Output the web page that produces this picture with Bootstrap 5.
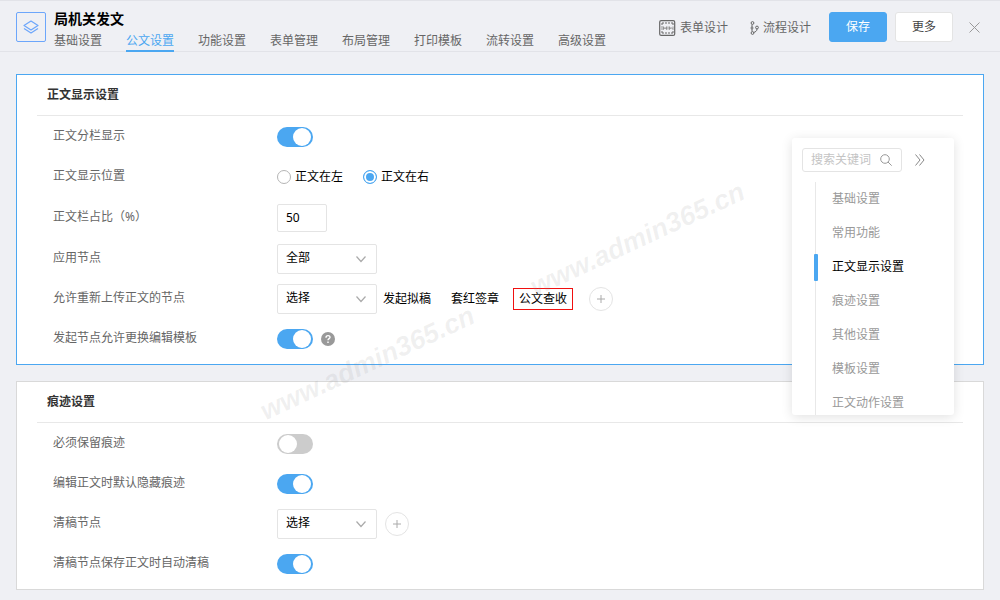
<!DOCTYPE html>
<html lang="zh-CN">
<head>
<meta charset="utf-8">
<meta name="viewport" content="width=device-width, initial-scale=1">
<title>局机关发文 - 公文设置</title>
<link href="https://cdn.jsdelivr.net/npm/bootstrap@5.3.0/dist/css/bootstrap.min.css" rel="stylesheet">
<style>
:root { --accent: #4ba7f1; --line: #e4e4e4; --ink: #666; }
body { font: 12px/18px "Noto Sans", "Noto Sans CJK SC", sans-serif; color: var(--ink); background: #eff0f4; }
button, input, select { font: inherit; }
.topbar { border-top: 1px solid #e2e3e8; border-bottom: 1px solid #e2e3e8; height: 52px; padding-top: 2px; }
.app-icon { width: 30px; height: 30px; border: 1px solid #6ca6fb; border-radius: 2px; }
.app-title { font-size: 14px; line-height: 18px; color: #000; }
.tabs { gap: 24px; margin-bottom: -1px; }
.tabs .nav-link { padding: 4px 0 0; height: 24px; color: var(--ink); border-bottom: 2px solid transparent; }
.tabs .nav-link.active { color: var(--accent); border-color: var(--accent); }
.tool { color: var(--ink); text-decoration: none; gap: 4px; padding-top: 2px; }
.tool-form { margin-right: 22px; }
.tool-flow { margin-right: 18px; }
.act { width: 58px; height: 30px; padding: 0; font-size: 12px; line-height: 18px; border-radius: 3px; }
.act-save { background: var(--accent); border-color: var(--accent); color: #fff; }
.act-more { background: #fff; border: 1px solid var(--line); color: #444; }
.bare { background: none; border: 0; padding: 0; display: flex; }
main { padding: 22px 16px 10px; }
.panel { border: 1px solid #d9d9d9; border-radius: 0; padding: 0 20px 5px; color: var(--ink); }
.panel.current { border-color: var(--accent); }
.panel-title { height: 41px; margin: 0 0 1px; padding: 0 10px; font-size: 12px; color: #333; border-bottom: 1px solid #e8e8e8; }
.setting { height: 40px; padding-left: 16px; }
.setting.tall { height: 42px; }
.setting-label { width: 224px; padding-bottom: 2px; flex: none; }
.toggle { appearance: none; width: 36px; height: 20px; margin: 0; padding: 1px 2px; border-radius: 10px; background: #ccc; display: flex; flex: none; }
.toggle::before { content: ""; width: 18px; height: 18px; border-radius: 50%; background: #fff; }
.toggle:checked { background: var(--accent); justify-content: end; }
.dot { appearance: none; width: 14px; height: 14px; margin: 0; border: 1px solid #b5b5b5; border-radius: 50%; background: #fff; }
.dot:checked { border-color: var(--accent); background: var(--accent); box-shadow: inset 0 0 0 2px #fff; }
.field, .picker { border: 1px solid var(--line); border-radius: 2px; font-size: 12px; line-height: 18px; padding: 0 8px 2px; color: #000; }
.field { width: 50px; height: 28px; }
.picker { width: 100px; height: 30px; background: #fff url("data:image/svg+xml,%3Csvg xmlns='http://www.w3.org/2000/svg' viewBox='0 0 10 10'%3E%3Cpath d='M.5 2.5 5 7.500 9.500 2.500' fill='none' stroke='%23aaa' stroke-width='1.200'/%3E%3C/svg%3E") no-repeat right 10px center / 10px 10px; }
.node-tag { padding: 1px 5px; border: 1px solid transparent; color: #000; }
.node-tag.picked { border-color: #f01010; }
.add { width: 24px; height: 24px; padding: 0; border: 1px solid var(--line); border-radius: 50%; background: #fff; display: flex; align-items: center; justify-content: center; }
.anchor-menu { top: 86px; right: 46px; width: 162px; height: 277px; padding: 10px 10px 0; background: #fff; border-radius: 3px; box-shadow: 0 2px 12px rgba(0,0,0,.12); overflow: hidden; z-index: 3; }
.search { width: 100px; height: 24px; border: 1px solid var(--line); border-radius: 3px; padding: 0 9px 0 8px; }
.search input { width: 64px; border: 0; padding: 0; outline: 0; background: none; }
.search input::placeholder { color: #c4c4c4; opacity: 1; }
.collapse-btn { margin-left: 13px; }
.anchor-list { margin: 10px 0 0 13px; border-left: 1px solid #e8e8e8; }
.anchor-list .nav-link { height: 34px; padding: 0 0 0 16px; color: #999; display: flex; align-items: center; }
.anchor-list .nav-link.active { color: #000; }
.anchor-list .nav-link.active::before { content: ""; width: 4px; height: 27px; margin: 0 14px 0 -18px; border-radius: 1px; background: var(--accent); }
.watermark { font: italic bold 27px/30px "Liberation Sans", sans-serif; color: rgba(140,140,140,.13); transform: rotate(-25deg); transform-origin: left bottom; pointer-events: none; z-index: 2; white-space: nowrap; }
.mark-a { left: 268px; top: 344px; }
.mark-b { left: 538px; top: 220px; }
</style>
</head>
<body>
<header class="topbar d-flex px-3">
  <div class="app-icon d-flex align-items-center justify-content-center flex-shrink-0 me-2 align-self-center">
    <svg width="16" height="14" viewBox="0 0 16 14" fill="none" stroke="#6ca6fb" stroke-width="1.200" stroke-linejoin="round"><path d="M8 1 15 5.500 8 10 1 5.500ZM1 8.500 8 13l7-4.500"/></svg>
  </div>
  <div class="flex-grow-1 d-flex flex-column justify-content-end">
    <h1 class="app-title fw-bold m-0">局机关发文</h1>
    <nav class="nav tabs flex-nowrap text-nowrap">
      <a class="nav-link" href="#">基础设置</a>
      <a class="nav-link active" href="#">公文设置</a>
      <a class="nav-link" href="#">功能设置</a>
      <a class="nav-link" href="#">表单管理</a>
      <a class="nav-link" href="#">布局管理</a>
      <a class="nav-link" href="#">打印模板</a>
      <a class="nav-link" href="#">流转设置</a>
      <a class="nav-link" href="#">高级设置</a>
    </nav>
  </div>
  <div class="d-flex align-items-center text-nowrap">
    <a class="tool tool-form d-flex align-items-center" href="#">
      <svg width="17" height="16" viewBox="0 0 17 16" fill="none" stroke="#666"><rect x=".7" y=".6" width="15" height="14.800" rx="1.500" stroke-width="1.200"/><path d="M3 5V3h2M6 3h2M9 3h2M12 3h2v2M3 11v2h2M6 13h2M9 13h2M12 13h2v-2"/><path d="M3 6v4M4.500 6.500v3l1.500-2 1.500 2v-3M9 6.500v3M10.500 6.500v3l1.500-2 2 2v-3" stroke="#888" stroke-width=".9"/></svg>
      表单设计
    </a>
    <a class="tool tool-flow d-flex align-items-center" href="#">
      <svg width="9" height="14" viewBox="0 0 9 14" fill="none" stroke="#666"><circle cx="2.500" cy="2" r="1.400"/><circle cx="2.500" cy="12" r="1.400"/><circle cx="7" cy="6.500" r="1.400"/><circle cx="2" cy="7" r="1"/><path d="M2 3.500V6M2 8v2.500M7 8c0 2-1.500 3-3.500 3.500"/></svg>
      流程设计
    </a>
    <button type="button" class="btn act act-save me-2">保存</button>
    <button type="button" class="btn act act-more me-3">更多</button>
    <button type="button" class="bare me-1" aria-label="关闭">
      <svg width="11" height="11" viewBox="0 0 11 11" stroke="#999"><path d="m.5.5 10 10m0-10-10 10"/></svg>
    </button>
  </div>
</header>

<main class="position-relative d-flex flex-column gap-3">
  <section class="card panel current">
    <h2 class="panel-title fw-bold d-flex align-items-center">正文显示设置</h2>
    <div class="setting d-flex align-items-center">
      <label class="setting-label" for="split">正文分栏显示</label>
      <input class="toggle" type="checkbox" role="switch" id="split" checked>
    </div>
    <div class="setting d-flex align-items-center">
      <span class="setting-label" id="side">正文显示位置</span>
      <div class="d-flex text-black" role="radiogroup" aria-labelledby="side">
        <label class="d-flex align-items-center gap-1 me-3 pe-1"><input class="dot" type="radio" name="side">正文在左</label>
        <label class="d-flex align-items-center gap-1"><input class="dot" type="radio" name="side" checked>正文在右</label>
      </div>
    </div>
    <div class="setting tall d-flex align-items-center">
      <label class="setting-label" for="ratio">正文栏占比（%）</label>
      <input class="form-control field" type="text" id="ratio" value="50">
    </div>
    <div class="setting d-flex align-items-center">
      <label class="setting-label" for="scope">应用节点</label>
      <select class="form-select picker" id="scope"><option>全部</option></select>
    </div>
    <div class="setting d-flex align-items-center">
      <label class="setting-label" for="reupload">允许重新上传正文的节点</label>
      <select class="form-select picker" id="reupload"><option>选择</option></select>
      <div class="d-flex gap-2 me-3 text-nowrap">
        <span class="node-tag">发起拟稿</span>
        <span class="node-tag">套红签章</span>
        <span class="node-tag picked">公文查收</span>
      </div>
      <button type="button" class="add" aria-label="添加节点"><svg width="10" height="10" viewBox="0 0 10 10" stroke="#aaa"><path d="M5 1v8M1 5h8"/></svg></button>
    </div>
    <div class="setting d-flex align-items-center">
      <label class="setting-label" for="swap">发起节点允许更换编辑模板</label>
      <input class="toggle me-2" type="checkbox" role="switch" id="swap" checked>
      <button type="button" class="bare" aria-label="帮助">
        <svg width="14" height="14" viewBox="0 0 14 14"><circle cx="7" cy="7" r="7" fill="#999"/><path d="M5 5.700C5 2.800 9.200 3 9 5.500 8.900 6.700 7 6.700 7 8.300M7 9.500v1.400" fill="none" stroke="#fff" stroke-width="1.400"/></svg>
      </button>
    </div>
  </section>

  <section class="card panel">
    <h2 class="panel-title fw-bold d-flex align-items-center">痕迹设置</h2>
    <div class="setting d-flex align-items-center">
      <label class="setting-label" for="keep">必须保留痕迹</label>
      <input class="toggle" type="checkbox" role="switch" id="keep">
    </div>
    <div class="setting d-flex align-items-center">
      <label class="setting-label" for="hide">编辑正文时默认隐藏痕迹</label>
      <input class="toggle" type="checkbox" role="switch" id="hide" checked>
    </div>
    <div class="setting d-flex align-items-center">
      <label class="setting-label" for="clean">清稿节点</label>
      <select class="form-select picker me-2" id="clean"><option>选择</option></select>
      <button type="button" class="add" aria-label="添加清稿节点"><svg width="10" height="10" viewBox="0 0 10 10" stroke="#aaa"><path d="M5 1v8M1 5h8"/></svg></button>
    </div>
    <div class="setting d-flex align-items-center">
      <label class="setting-label" for="autoclean">清稿节点保存正文时自动清稿</label>
      <input class="toggle" type="checkbox" role="switch" id="autoclean" checked>
    </div>
  </section>

  <div class="watermark mark-a position-absolute" aria-hidden="true">www.admin365.cn</div>
  <div class="watermark mark-b position-absolute" aria-hidden="true">www.admin365.cn</div>

  <aside class="anchor-menu position-absolute">
    <div class="d-flex align-items-center">
      <div class="search d-flex align-items-center justify-content-between">
        <input type="text" placeholder="搜索关键词" aria-label="搜索关键词">
        <svg width="12" height="12" viewBox="0 0 12 12" fill="none" stroke="#999"><circle cx="5" cy="5" r="4.300"/><path d="m8 8 3.700 3.700"/></svg>
      </div>
      <button type="button" class="bare collapse-btn" aria-label="收起"><svg width="10" height="12" viewBox="0 0 10 12" fill="none" stroke="#888"><path d="m.5.5 4.500 5.500-4.500 5.500M4.500.5 9 6l-4.500 5.500"/></svg></button>
    </div>
    <nav class="nav anchor-list flex-column">
      <a class="nav-link" href="#">基础设置</a>
      <a class="nav-link" href="#">常用功能</a>
      <a class="nav-link active" href="#">正文显示设置</a>
      <a class="nav-link" href="#">痕迹设置</a>
      <a class="nav-link" href="#">其他设置</a>
      <a class="nav-link" href="#">模板设置</a>
      <a class="nav-link" href="#">正文动作设置</a>
    </nav>
  </aside>
</main>
<script src="https://cdn.jsdelivr.net/npm/bootstrap@5.3.0/dist/js/bootstrap.bundle.min.js"></script>
</body>
</html>
